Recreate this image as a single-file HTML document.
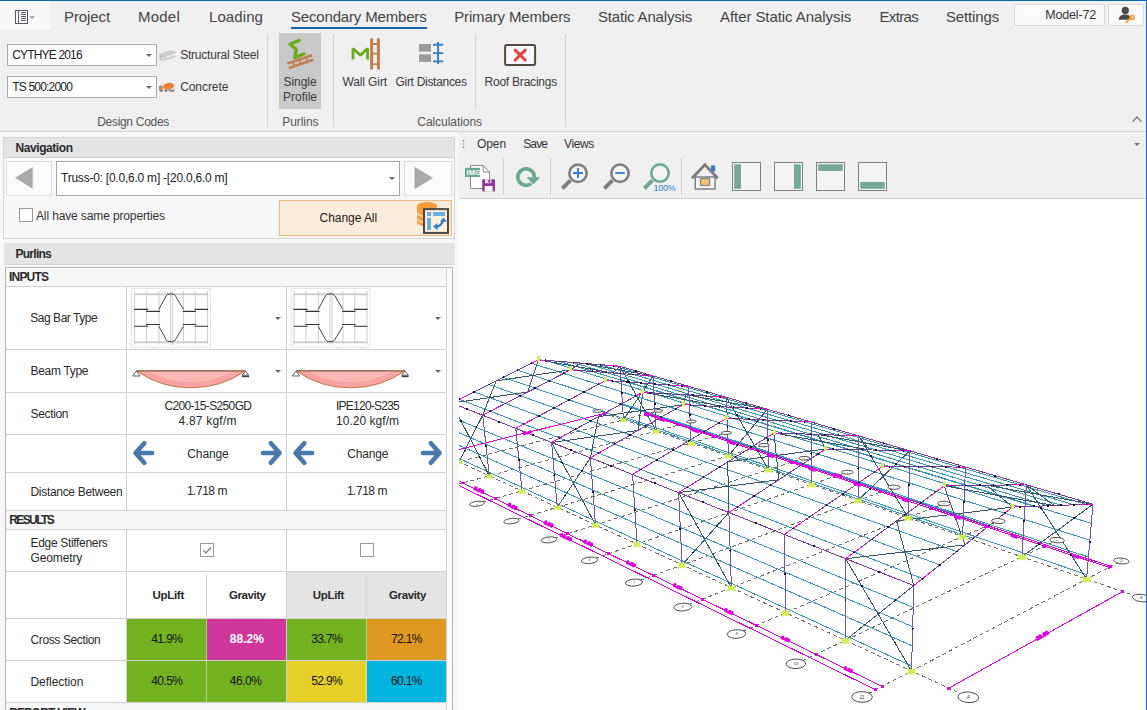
<!DOCTYPE html>
<html><head><meta charset="utf-8"><title>Purlins</title>
<style>
html,body{margin:0;padding:0}
body{width:1147px;height:710px;overflow:hidden;position:relative;background:#f0f0f0;font-family:"Liberation Sans",sans-serif;}
.a{position:absolute;box-sizing:border-box}
.t{position:absolute;white-space:pre;line-height:1;}
.sel{background:#fff;border:1px solid #ababab}
.arr{width:0;height:0;border-left:3px solid transparent;border-right:3px solid transparent;border-top:3px solid #666}
.vsep{width:1px;background:#d4d4d4}
.hdr{background:#e4e4e4}
.cell{background:#fff}
.ln{background:#d0d0d0}
</style></head><body>
<!-- window border -->
<div class="a" style="left:0;top:0;width:1147px;height:1px;background:#0f63b8"></div>
<div class="a" style="left:1146px;top:0;width:1px;height:710px;background:#1a6ac0;z-index:9"></div>
<!-- file button -->
<div class="a" style="left:0;top:1px;width:51px;height:29px;background:#f8f8f8"></div>
<!-- active tab underline -->
<div class="a" style="left:291px;top:27px;width:136px;height:2px;background:#1565b5"></div>
<!-- model button -->
<div class="a" style="left:1014px;top:4px;width:91px;height:22px;background:#f9f9f9;border:1px solid #d9d9d9;border-radius:2px"></div>
<div class="a" style="left:1108px;top:4px;width:36px;height:22px;background:#f9f9f9;border:1px solid #d9d9d9;border-radius:2px"></div>
<!-- ribbon -->
<div class="a sel" style="left:7px;top:44px;width:150px;height:22px"></div>
<div class="a sel" style="left:7px;top:76px;width:150px;height:22px"></div>
<div class="a arr" style="left:146px;top:54px"></div>
<div class="a arr" style="left:146px;top:86px"></div>
<div class="a vsep" style="left:267px;top:34px;height:93px"></div>
<div class="a" style="left:279px;top:33px;width:42px;height:76px;background:#c9c9c9"></div>
<div class="a vsep" style="left:333px;top:34px;height:93px"></div>
<div class="a vsep" style="left:475px;top:34px;height:75px"></div>
<div class="a vsep" style="left:565px;top:34px;height:93px"></div>
<div class="a" style="left:0;top:131px;width:1146px;height:1px;background:#d2d2d2"></div>
<!-- left pane -->
<div class="a" style="left:0;top:132px;width:459px;height:578px;background:#f8f8f8"></div>
<!-- left: navigation panel -->
<div class="a" style="left:3px;top:137px;width:452px;height:102px;border:1px solid #d4d4d4;background:#f8f8f8"></div>
<div class="a hdr" style="left:4px;top:138px;width:450px;height:19px"></div>
<div class="a" style="left:4px;top:157px;width:450px;height:1px;background:#d0d0d0"></div>
<div class="a" style="left:6px;top:161px;width:46px;height:35px;border:1px solid #dcdcdc;background:#fbfbfb"></div>
<div class="a" style="left:404px;top:161px;width:48px;height:35px;border:1px solid #dcdcdc;background:#fbfbfb"></div>
<div class="a sel" style="left:56px;top:161px;width:344px;height:35px;border-color:#a6a6a6"></div>
<div class="a arr" style="left:389px;top:177px"></div>
<div class="a" style="left:19px;top:208px;width:14px;height:14px;background:#fff;border:1px solid #9a9a9a"></div>
<div class="a" style="left:279px;top:200px;width:173px;height:36px;background:#fbecdc;border:1px solid #f2b77a"></div>
<!-- purlins header -->
<div class="a hdr" style="left:4px;top:243px;width:451px;height:22px;border-bottom:1px solid #d6d6d6"></div>
<!-- table container -->
<div class="a" style="left:5px;top:267px;width:448px;height:460px;background:#fff;border:1px solid #b4b4b4"></div>
<!-- table rows -->
<div class="a" style="left:6px;top:268px;width:440px;height:18px;background:#f8f8f8"></div>
<div class="a" style="left:6px;top:511px;width:440px;height:18px;background:#f8f8f8"></div>
<div class="a" style="left:6px;top:703px;width:440px;height:10px;background:#f8f8f8"></div>
<div class="a" style="left:286px;top:572px;width:160px;height:46px;background:#e4e4e4"></div>
<!-- horizontal lines -->
<div class="a ln" style="left:6px;top:286px;width:441px;height:1px"></div>
<div class="a ln" style="left:6px;top:349px;width:441px;height:1px"></div>
<div class="a ln" style="left:6px;top:392px;width:441px;height:1px"></div>
<div class="a ln" style="left:6px;top:434px;width:441px;height:1px"></div>
<div class="a ln" style="left:6px;top:472px;width:441px;height:1px"></div>
<div class="a ln" style="left:6px;top:510px;width:441px;height:1px"></div>
<div class="a ln" style="left:6px;top:529px;width:441px;height:1px"></div>
<div class="a ln" style="left:6px;top:571px;width:441px;height:1px"></div>
<div class="a ln" style="left:6px;top:618px;width:441px;height:1px"></div>
<div class="a ln" style="left:6px;top:660px;width:441px;height:1px"></div>
<div class="a ln" style="left:6px;top:702px;width:441px;height:1px"></div>
<!-- vertical lines -->
<div class="a ln" style="left:126px;top:287px;width:1px;height:223px"></div>
<div class="a ln" style="left:286px;top:287px;width:1px;height:223px"></div>
<div class="a ln" style="left:126px;top:530px;width:1px;height:172px"></div>
<div class="a ln" style="left:286px;top:530px;width:1px;height:172px"></div>
<div class="a ln" style="left:446px;top:268px;width:1px;height:442px"></div>
<div class="a ln" style="left:206px;top:574px;width:1px;height:42px"></div>
<div class="a ln" style="left:366px;top:574px;width:1px;height:42px;background:#d4d4d4"></div>
<!-- colored cells -->
<div class="a" style="left:127px;top:619px;width:80px;height:41px;background:#73b221"></div>
<div class="a" style="left:207px;top:619px;width:79px;height:41px;background:#d0379b"></div>
<div class="a" style="left:287px;top:619px;width:80px;height:41px;background:#73b221"></div>
<div class="a" style="left:367px;top:619px;width:79px;height:41px;background:#df9821"></div>
<div class="a" style="left:127px;top:661px;width:80px;height:41px;background:#73b221"></div>
<div class="a" style="left:207px;top:661px;width:79px;height:41px;background:#73b221"></div>
<div class="a" style="left:287px;top:661px;width:80px;height:41px;background:#e5d02a"></div>
<div class="a" style="left:367px;top:661px;width:79px;height:41px;background:#00b5e0"></div>
<div class="a" style="left:206px;top:619px;width:1px;height:83px;background:rgba(255,255,255,.45)"></div><div class="a" style="left:366px;top:619px;width:1px;height:83px;background:rgba(255,255,255,.45)"></div>
<!-- checkboxes -->
<div class="a" style="left:200px;top:543px;width:14px;height:14px;background:#fff;border:1px solid #9a9a9a"></div>
<div class="a" style="left:360px;top:543px;width:14px;height:14px;background:#fff;border:1px solid #9a9a9a"></div>
<!-- table dropdown arrows -->
<div class="a arr" style="left:275px;top:317px"></div>
<div class="a arr" style="left:435px;top:317px"></div>
<div class="a arr" style="left:275px;top:370px"></div>
<div class="a arr" style="left:435px;top:370px"></div>
<!-- splitter -->

<!-- right pane -->
<div class="a" style="left:459px;top:199px;width:687px;height:511px;background:#fff"></div>
<div class="a" style="left:459px;top:198px;width:687px;height:1px;background:#cfcfcf"></div>
<div class="a vsep" style="left:503px;top:158px;height:37px"></div>
<div class="a vsep" style="left:550px;top:158px;height:37px"></div>
<div class="a vsep" style="left:681px;top:158px;height:37px"></div>
<div class="a arr" style="left:1134px;top:143px;border-top-color:#777"></div>
<svg class="a" style="left:459px;top:199px" width="687" height="511" viewBox="459 199 687 511" fill="none" stroke-width="1" shape-rendering="crispEdges">
<path d="M868 693.8L1117.8 562.8M801.8 660.9L1053.6 541.8M742.4 631.4L994.7 522.6M688.6 604.7L940.4 504.9M639.8 580.5L890.3 488.6M595.2 558.3L843.8 473.4M554.4 538.1L800.6 459.4M516.9 519.4L760.4 446.3M482.3 502.2L722.9 434M450.3 486.3L687.7 422.5M420.5 471.6L654.7 411.8M963.8 695.1L436.6 451.5M1137.1 596.5L599.4 411.5" stroke="#6e6e6e" stroke-dasharray="4 3"/>
<path d="M922.6 578.6L459.5 399.3M939.8 564.9L474.3 391.9M956.7 551.5L488.9 384.5M973.1 538.4L503.3 377.3M989.2 525.6L517.5 370.2M1004.8 513.2L531.4 363.2M1086.7 504.4L613.6 365.8M1074.1 504.8L600.5 364.7M1061.1 505.3L587.1 363.7M1047.8 505.8L573.5 362.6M1034 506.3L559.6 361.5M1019.8 506.8L545.5 360.3M911.6 666L458.5 458.3M912.2 645.8L456.8 444.4M912.7 626.7L455.3 431.2M913.2 607.4L453.7 418M1087 574.7L623.3 416.6M1088.5 557L622.5 403.9M1089.9 540.2L621.7 391.9M1091.3 523.3L620.9 379.8" stroke="#3a96bd"/>
<path d="M911.5 671L845.7 558.7M845.3 640.4L913.8 585.6M1086.6 579.1L1026.3 484.8M1021.9 556.8L1092.9 504.2M913.8 585.6L896.6 521M845.7 558.7L965 544.9M965 544.9L944.1 485.8M896.6 521L1012.5 507.1M1092.9 504.2L986.9 485.3M1026.3 484.8L1054.5 505.6M1054.5 505.6L944.1 485.8M986.9 485.3L1012.5 507.1M731.4 587.7L678.6 492.6M682.1 564.9L728.9 512.5M908.2 517.7L858.5 435.8M858 500.4L909.8 450.8M728.9 512.5L727.7 461.9M678.6 492.6L778.8 479.8M778.8 479.8L774 433M727.7 461.9L825.6 449M909.8 450.8L817.8 434.4M858.5 435.8L869.3 449.9M869.3 449.9L774 433M817.8 434.4L825.6 449M595.5 524.9L551.6 442.5M557.3 507.3L590.4 457.8M768.5 469.7L726.5 397.3M728.4 455.9L767.3 409.2M590.4 457.8L598.4 416.7M551.6 442.5L638 430.5M638 430.5L642.7 392.2M598.4 416.7L683 404.7M767.3 409.2L686 394.8M726.5 397.3L726.6 407M726.6 407L642.7 392.2M686 394.8L683 404.7M489.3 475.9L451.9 403.1M458.9 461.8L482.7 415.2M656.2 431L620 366.3M623.5 419.8L653.1 375.9M482.7 415.2L496.1 380.9M451.9 403.1L527.7 392M527.7 392L538.3 359.8M496.1 380.9L570.6 369.8M653.1 375.9L580.4 363.1M620 366.3L613.1 373M613.1 373L538.3 359.8M580.4 363.1L570.6 369.8" stroke="#33566b"/>
<path d="M911.5 671L913.8 585.6M1086.6 579.1L1092.9 504.2M845.3 640.4L845.7 558.7M1021.9 556.8L1026.3 484.8M785.6 612.8L784.4 534.4M962.6 536.4L965.5 467M731.4 587.7L728.9 512.5M908.2 517.7L909.8 450.8M682.1 564.9L678.6 492.6M858 500.4L858.5 435.8M637 544.1L632.6 474.4M811.5 484.5L811.1 422M595.5 524.9L590.4 457.8M768.5 469.7L767.3 409.2M557.3 507.3L551.6 442.5M728.4 455.9L726.5 397.3M522 491L515.8 428.3M691.1 443L688.6 386.3M489.3 475.9L482.7 415.2M656.2 431L653.1 375.9M458.9 461.8L451.9 403.1M623.5 419.8L620 366.3" stroke="#6a55b0"/>
<path d="M913.8 585.6L451.9 403.1M1092.9 504.2L620 366.3M931.3 571.7L1004.8 513.2M1080.5 504.6L1019.8 506.8M863 545.8L936.4 491.5M1013.6 484.9L951.5 485.7M801.6 522.5L874.4 471.9M952.5 467L889.5 466.6M745.9 501.4L818 454M896.6 450.5L833.1 449.2M695.3 482.2L766.5 437.7M845.3 435.4L781.5 433.2M649 464.6L719.2 422.7M797.9 421.4L734.1 418.6M606.6 448.5L675.7 408.9M754 408.5L690.5 405.1M567.5 433.7L635.5 396.2M713.3 396.5L650.1 392.7M531.4 420L598.2 384.4M675.4 385.4L612.7 381.1M498 407.3L563.6 373.4M640.1 375L577.9 370.4M466.9 395.6L531.4 363.2M607 365.2L545.5 360.3" stroke="#7a3a9a"/>
<path d="M913.8 585.6L931.3 571.7M1004.8 513.2L1012.5 507.1M1092.9 504.2L1080.5 504.6M1019.8 506.8L1012.5 507.1M845.7 558.7L863 545.8M936.4 491.5L944.1 485.8M1026.3 484.8L1013.6 484.9M951.5 485.7L944.1 485.8M784.4 534.4L801.6 522.5M874.4 471.9L882.1 466.5M965.5 467L952.5 467M889.5 466.6L882.1 466.5M728.9 512.5L745.9 501.4M818 454L825.6 449M909.8 450.8L896.6 450.5M833.1 449.2L825.6 449M678.6 492.6L695.3 482.2M766.5 437.7L774 433M858.5 435.8L845.3 435.4M781.5 433.2L774 433M632.6 474.4L649 464.6M719.2 422.7L726.6 418.3M811.1 422L797.9 421.4M734.1 418.6L726.6 418.3M590.4 457.8L606.6 448.5M675.7 408.9L683 404.7M767.3 409.2L754 408.5M690.5 405.1L683 404.7M551.6 442.5L567.5 433.7M635.5 396.2L642.7 392.2M726.5 397.3L713.3 396.5M650.1 392.7L642.7 392.2M515.8 428.3L531.4 420M598.2 384.4L605.3 380.6M688.6 386.3L675.4 385.4M612.7 381.1L605.3 380.6M482.7 415.2L498 407.3M563.6 373.4L570.6 369.8M653.1 375.9L640.1 375M577.9 370.4L570.6 369.8M451.9 403.1L466.9 395.6M531.4 363.2L538.3 359.8M620 366.3L607 365.2M545.5 360.3L538.3 359.8" stroke="#ff00e6"/>
<path d="M882.1 686.4L432.9 468.4M875.6 689.8L427.2 469.9M1108.9 567.4L645.7 414.1M1110.9 566.4L647.7 413.6M948.8 688.2L1122.7 591.5M441.6 453.8L604.8 413.3" stroke="#dc00dc"/>
<g fill="#d6f060" stroke="none" shape-rendering="auto"><ellipse cx="911.5" cy="671.5" rx="4" ry="2.6"/><ellipse cx="1086.6" cy="579.6" rx="4" ry="2.6"/><ellipse cx="845.3" cy="640.9" rx="3.9" ry="2.6"/><ellipse cx="1021.9" cy="557.3" rx="3.9" ry="2.6"/><ellipse cx="785.6" cy="613.3" rx="3.7" ry="2.5"/><ellipse cx="962.6" cy="536.9" rx="3.7" ry="2.5"/><ellipse cx="731.4" cy="588.2" rx="3.6" ry="2.4"/><ellipse cx="908.2" cy="518.2" rx="3.6" ry="2.4"/><ellipse cx="682.1" cy="565.4" rx="3.5" ry="2.4"/><ellipse cx="858" cy="500.9" rx="3.5" ry="2.4"/><ellipse cx="637" cy="544.6" rx="3.4" ry="2.3"/><ellipse cx="811.5" cy="485" rx="3.4" ry="2.3"/><ellipse cx="595.5" cy="525.4" rx="3.3" ry="2.2"/><ellipse cx="768.5" cy="470.2" rx="3.3" ry="2.2"/><ellipse cx="557.3" cy="507.8" rx="3.2" ry="2.1"/><ellipse cx="728.4" cy="456.4" rx="3.2" ry="2.1"/><ellipse cx="522" cy="491.5" rx="3.1" ry="2.1"/><ellipse cx="691.1" cy="443.5" rx="3.1" ry="2.1"/><ellipse cx="489.3" cy="476.4" rx="3" ry="2"/><ellipse cx="656.2" cy="431.5" rx="3" ry="2"/><ellipse cx="458.9" cy="462.3" rx="2.9" ry="1.9"/><ellipse cx="623.5" cy="420.3" rx="2.9" ry="1.9"/></g>
<path d="M906.5 668.2L916.4 674.5M916.4 668.2L906.5 674.5M1081.7 576.4L1091.6 582.6M1091.6 576.4L1081.7 582.6M840.5 637.7L850.1 643.8M850.1 637.7L840.5 643.8M1017.1 554.2L1026.7 560.3M1026.7 554.2L1017.1 560.3M780.9 610.2L790.3 616.1M790.3 610.2L780.9 616.1M957.9 533.8L967.3 539.8M967.3 533.8L957.9 539.8M726.9 585.2L736 591M736 585.2L726.9 591M903.6 515.2L912.7 520.9M912.7 515.2L903.6 520.9M677.7 562.5L686.5 568.1M686.5 562.5L677.7 568.1M853.5 498L862.4 503.6M862.4 498L853.5 503.6M632.7 541.7L641.2 547.1M641.2 541.7L632.7 547.1M807.3 482.1L815.8 487.5M815.8 482.1L807.3 487.5M591.4 522.6L599.7 527.9M599.7 522.6L591.4 527.9M764.3 467.4L772.6 472.6M772.6 467.4L764.3 472.6M553.3 505.1L561.3 510.1M561.3 505.1L553.3 510.1M724.4 453.6L732.4 458.7M732.4 453.6L724.4 458.7M518.2 488.8L525.9 493.7M525.9 488.8L518.2 493.7M687.2 440.9L694.9 445.8M694.9 440.9L687.2 445.8M485.6 473.8L493 478.5M493 473.8L485.6 478.5M652.4 428.9L659.9 433.7M659.9 428.9L652.4 433.7M455.3 459.8L462.5 464.3M462.5 459.8L455.3 464.3M619.9 417.8L627.1 422.3M627.1 417.8L619.9 422.3" stroke="#d0ec50" stroke-width="1.6" shape-rendering="auto" opacity="0.8"/>
<g fill="#d4ee5a" stroke="none"><rect x="1011" y="503.6" width="3" height="5"/><rect x="942.6" y="482.3" width="3" height="5"/><rect x="880.6" y="463" width="3" height="5"/><rect x="824.1" y="445.5" width="3" height="5"/><rect x="772.5" y="429.5" width="3" height="5"/><rect x="725.1" y="414.8" width="3" height="5"/><rect x="681.5" y="401.2" width="3" height="5"/><rect x="641.2" y="388.7" width="3" height="5"/><rect x="603.8" y="377.1" width="3" height="5"/><rect x="569.1" y="366.3" width="3" height="5"/><rect x="536.8" y="356.3" width="3" height="5"/></g>
<g fill="#101020" stroke="none"><circle cx="912.6" cy="628.9" r="1.1"/><circle cx="1089.7" cy="542.1" r="1.1"/><circle cx="845.5" cy="600.1" r="1.1"/><circle cx="1024.1" cy="521.2" r="1.1"/><circle cx="785" cy="574.1" r="1.1"/><circle cx="964.1" cy="502.1" r="1.1"/><circle cx="730.2" cy="550.6" r="1.1"/><circle cx="909" cy="484.6" r="1.1"/><circle cx="680.3" cy="529.2" r="1.1"/><circle cx="858.2" cy="468.5" r="1.1"/><circle cx="634.8" cy="509.7" r="1.1"/><circle cx="811.3" cy="453.5" r="1.1"/><circle cx="593" cy="491.7" r="1.1"/><circle cx="767.9" cy="439.7" r="1.1"/><circle cx="554.5" cy="475.2" r="1.1"/><circle cx="727.5" cy="426.9" r="1.1"/><circle cx="519" cy="460" r="1.1"/><circle cx="689.8" cy="414.9" r="1.1"/><circle cx="486" cy="445.8" r="1.1"/><circle cx="654.7" cy="403.7" r="1.1"/><circle cx="455.4" cy="432.7" r="1.1"/><circle cx="621.8" cy="393.2" r="1.1"/><circle cx="878.8" cy="571.7" r="1.1"/><circle cx="814.2" cy="546.2" r="1.1"/><circle cx="756" cy="523.2" r="1.1"/><circle cx="703.2" cy="502.3" r="1.1"/><circle cx="655" cy="483.3" r="1.1"/><circle cx="611" cy="465.9" r="1.1"/><circle cx="570.6" cy="450" r="1.1"/><circle cx="533.4" cy="435.2" r="1.1"/><circle cx="499" cy="421.6" r="1.1"/><circle cx="467" cy="409" r="1.1"/><circle cx="1058.8" cy="494.2" r="1.1"/><circle cx="995.3" cy="475.7" r="1.1"/><circle cx="937.1" cy="458.7" r="1.1"/><circle cx="883.6" cy="443.1" r="1.1"/><circle cx="834.3" cy="428.8" r="1.1"/><circle cx="788.8" cy="415.5" r="1.1"/><circle cx="746.5" cy="403.2" r="1.1"/><circle cx="707.2" cy="391.7" r="1.1"/><circle cx="670.6" cy="381" r="1.1"/><circle cx="636.3" cy="371" r="1.1"/><circle cx="922.6" cy="578.6" r="1.0"/><circle cx="939.8" cy="564.9" r="1.0"/><circle cx="956.7" cy="551.5" r="1.0"/><circle cx="973.1" cy="538.4" r="1.0"/><circle cx="989.2" cy="525.6" r="1.0"/><circle cx="1004.8" cy="513.2" r="1.0"/><circle cx="1086.7" cy="504.4" r="1.0"/><circle cx="1074.1" cy="504.8" r="1.0"/><circle cx="1061.1" cy="505.3" r="1.0"/><circle cx="1047.8" cy="505.8" r="1.0"/><circle cx="1034" cy="506.3" r="1.0"/><circle cx="1019.8" cy="506.8" r="1.0"/><circle cx="854.4" cy="552.2" r="1.0"/><circle cx="871.6" cy="539.5" r="1.0"/><circle cx="888.3" cy="527.1" r="1.0"/><circle cx="904.7" cy="514.9" r="1.0"/><circle cx="920.7" cy="503.1" r="1.0"/><circle cx="936.4" cy="491.5" r="1.0"/><circle cx="1020" cy="484.8" r="1.0"/><circle cx="1007" cy="485" r="1.0"/><circle cx="993.7" cy="485.2" r="1.0"/><circle cx="980" cy="485.3" r="1.0"/><circle cx="966" cy="485.5" r="1.0"/><circle cx="951.5" cy="485.7" r="1.0"/><circle cx="793" cy="528.4" r="1.0"/><circle cx="810" cy="516.6" r="1.0"/><circle cx="826.6" cy="505.1" r="1.0"/><circle cx="842.9" cy="493.8" r="1.0"/><circle cx="858.8" cy="482.7" r="1.0"/><circle cx="874.4" cy="471.9" r="1.0"/><circle cx="959.1" cy="467" r="1.0"/><circle cx="945.9" cy="466.9" r="1.0"/><circle cx="932.4" cy="466.8" r="1.0"/><circle cx="918.5" cy="466.8" r="1.0"/><circle cx="904.2" cy="466.7" r="1.0"/><circle cx="889.5" cy="466.6" r="1.0"/><circle cx="737.5" cy="506.9" r="1.0"/><circle cx="754.3" cy="495.9" r="1.0"/><circle cx="770.7" cy="485.1" r="1.0"/><circle cx="786.8" cy="474.5" r="1.0"/><circle cx="802.6" cy="464.2" r="1.0"/><circle cx="818" cy="454" r="1.0"/><circle cx="903.3" cy="450.6" r="1.0"/><circle cx="889.9" cy="450.4" r="1.0"/><circle cx="876.3" cy="450.1" r="1.0"/><circle cx="862.3" cy="449.8" r="1.0"/><circle cx="847.9" cy="449.5" r="1.0"/><circle cx="833.1" cy="449.2" r="1.0"/><circle cx="687" cy="487.4" r="1.0"/><circle cx="703.5" cy="477" r="1.0"/><circle cx="719.7" cy="466.9" r="1.0"/><circle cx="735.6" cy="457" r="1.0"/><circle cx="751.2" cy="447.2" r="1.0"/><circle cx="766.5" cy="437.7" r="1.0"/><circle cx="851.9" cy="435.6" r="1.0"/><circle cx="838.5" cy="435.1" r="1.0"/><circle cx="824.8" cy="434.7" r="1.0"/><circle cx="810.7" cy="434.2" r="1.0"/><circle cx="796.3" cy="433.7" r="1.0"/><circle cx="781.5" cy="433.2" r="1.0"/><circle cx="640.8" cy="469.5" r="1.0"/><circle cx="657.1" cy="459.8" r="1.0"/><circle cx="673.1" cy="450.2" r="1.0"/><circle cx="688.7" cy="440.9" r="1.0"/><circle cx="704.1" cy="431.7" r="1.0"/><circle cx="719.2" cy="422.7" r="1.0"/><circle cx="804.5" cy="421.7" r="1.0"/><circle cx="791.1" cy="421.1" r="1.0"/><circle cx="777.4" cy="420.5" r="1.0"/><circle cx="763.3" cy="419.9" r="1.0"/><circle cx="748.9" cy="419.3" r="1.0"/><circle cx="734.1" cy="418.6" r="1.0"/><circle cx="598.5" cy="453.1" r="1.0"/><circle cx="614.5" cy="444" r="1.0"/><circle cx="630.2" cy="435" r="1.0"/><circle cx="645.6" cy="426.1" r="1.0"/><circle cx="660.8" cy="417.4" r="1.0"/><circle cx="675.7" cy="408.9" r="1.0"/><circle cx="760.7" cy="408.9" r="1.0"/><circle cx="747.2" cy="408.1" r="1.0"/><circle cx="733.5" cy="407.4" r="1.0"/><circle cx="719.5" cy="406.7" r="1.0"/><circle cx="705.2" cy="405.9" r="1.0"/><circle cx="690.5" cy="405.1" r="1.0"/><circle cx="559.6" cy="438.1" r="1.0"/><circle cx="575.3" cy="429.4" r="1.0"/><circle cx="590.7" cy="420.9" r="1.0"/><circle cx="605.9" cy="412.5" r="1.0"/><circle cx="620.8" cy="404.3" r="1.0"/><circle cx="635.5" cy="396.2" r="1.0"/><circle cx="719.9" cy="396.9" r="1.0"/><circle cx="706.6" cy="396.1" r="1.0"/><circle cx="692.9" cy="395.3" r="1.0"/><circle cx="679" cy="394.4" r="1.0"/><circle cx="664.7" cy="393.5" r="1.0"/><circle cx="650.1" cy="392.7" r="1.0"/><circle cx="523.6" cy="424.2" r="1.0"/><circle cx="539.1" cy="415.9" r="1.0"/><circle cx="554.2" cy="407.8" r="1.0"/><circle cx="569.1" cy="399.9" r="1.0"/><circle cx="583.8" cy="392.1" r="1.0"/><circle cx="598.2" cy="384.4" r="1.0"/><circle cx="682" cy="385.8" r="1.0"/><circle cx="668.7" cy="384.9" r="1.0"/><circle cx="655.2" cy="384" r="1.0"/><circle cx="641.3" cy="383" r="1.0"/><circle cx="627.2" cy="382.1" r="1.0"/><circle cx="612.7" cy="381.1" r="1.0"/><circle cx="490.4" cy="411.3" r="1.0"/><circle cx="505.5" cy="403.5" r="1.0"/><circle cx="520.4" cy="395.8" r="1.0"/><circle cx="535" cy="388.2" r="1.0"/><circle cx="549.4" cy="380.8" r="1.0"/><circle cx="563.6" cy="373.4" r="1.0"/><circle cx="646.6" cy="375.4" r="1.0"/><circle cx="633.4" cy="374.5" r="1.0"/><circle cx="620" cy="373.5" r="1.0"/><circle cx="606.2" cy="372.5" r="1.0"/><circle cx="592.2" cy="371.4" r="1.0"/><circle cx="577.9" cy="370.4" r="1.0"/><circle cx="459.5" cy="399.3" r="1.0"/><circle cx="474.3" cy="391.9" r="1.0"/><circle cx="488.9" cy="384.5" r="1.0"/><circle cx="503.3" cy="377.3" r="1.0"/><circle cx="517.5" cy="370.2" r="1.0"/><circle cx="531.4" cy="363.2" r="1.0"/><circle cx="613.6" cy="365.8" r="1.0"/><circle cx="600.5" cy="364.7" r="1.0"/><circle cx="587.1" cy="363.7" r="1.0"/><circle cx="573.5" cy="362.6" r="1.0"/><circle cx="559.6" cy="361.5" r="1.0"/><circle cx="545.5" cy="360.3" r="1.0"/><circle cx="894.7" cy="642.3" r="1.0"/><circle cx="861.4" cy="627.5" r="1.0"/><circle cx="861.8" cy="586.2" r="1.0"/><circle cx="895.6" cy="600.1" r="1.0"/><circle cx="1071.3" cy="555.1" r="1.0"/><circle cx="1038.7" cy="544.3" r="1.0"/><circle cx="1041.2" cy="508" r="1.0"/><circle cx="1074.2" cy="518" r="1.0"/><circle cx="718" cy="563.6" r="1.0"/><circle cx="693.2" cy="552.5" r="1.0"/><circle cx="691.6" cy="516" r="1.0"/><circle cx="716.6" cy="526.3" r="1.0"/><circle cx="895.6" cy="496.9" r="1.0"/><circle cx="870.3" cy="488.6" r="1.0"/><circle cx="870.7" cy="456" r="1.0"/><circle cx="896.2" cy="463.8" r="1.0"/><circle cx="584.4" cy="504" r="1.0"/><circle cx="565.2" cy="495.5" r="1.0"/><circle cx="562.4" cy="462.8" r="1.0"/><circle cx="581.7" cy="470.7" r="1.0"/><circle cx="757.8" cy="451.3" r="1.0"/><circle cx="737.7" cy="444.7" r="1.0"/><circle cx="736.9" cy="415.2" r="1.0"/><circle cx="757.1" cy="421.4" r="1.0"/><circle cx="479.8" cy="457.4" r="1.0"/><circle cx="464.6" cy="450.6" r="1.0"/><circle cx="461.2" cy="421" r="1.0"/><circle cx="476.5" cy="427.4" r="1.0"/><circle cx="647" cy="414.6" r="1.0"/><circle cx="630.6" cy="409.2" r="1.0"/><circle cx="628.9" cy="382.3" r="1.0"/><circle cx="645.5" cy="387.3" r="1.0"/></g>
<g fill="#e600e6" stroke="none"><rect x="880.7" y="685" width="2.8" height="2.8"/><rect x="814.5" y="652.9" width="2.8" height="2.8"/><rect x="755" y="624" width="2.8" height="2.8"/><rect x="701.1" y="597.8" width="2.8" height="2.8"/><rect x="652.1" y="574" width="2.8" height="2.8"/><rect x="607.3" y="552.3" width="2.8" height="2.8"/><rect x="566.3" y="532.4" width="2.8" height="2.8"/><rect x="528.6" y="514.1" width="2.8" height="2.8"/><rect x="493.7" y="497.2" width="2.8" height="2.8"/><rect x="461.4" y="481.6" width="2.8" height="2.8"/><rect x="431.5" y="467" width="2.8" height="2.8"/><rect x="874.2" y="688.4" width="2.8" height="2.8"/><rect x="425.8" y="468.5" width="2.8" height="2.8"/><rect x="1107.5" y="566" width="2.8" height="2.8"/><rect x="1043.1" y="544.7" width="2.8" height="2.8"/><rect x="984.1" y="525.2" width="2.8" height="2.8"/><rect x="929.7" y="507.2" width="2.8" height="2.8"/><rect x="879.6" y="490.6" width="2.8" height="2.8"/><rect x="833.1" y="475.2" width="2.8" height="2.8"/><rect x="790" y="460.9" width="2.8" height="2.8"/><rect x="749.8" y="447.6" width="2.8" height="2.8"/><rect x="712.3" y="435.2" width="2.8" height="2.8"/><rect x="677.2" y="423.6" width="2.8" height="2.8"/><rect x="644.3" y="412.7" width="2.8" height="2.8"/><rect x="1109.5" y="565" width="2.8" height="2.8"/><rect x="646.3" y="412.2" width="2.8" height="2.8"/><rect x="947.4" y="686.8" width="2.8" height="2.8"/><rect x="1121.3" y="590.1" width="2.8" height="2.8"/><rect x="440.2" y="452.4" width="2.8" height="2.8"/><rect x="603.4" y="411.9" width="2.8" height="2.8"/></g>
<g fill="#dc00dc" stroke="#dc00dc" stroke-width="0.9" shape-rendering="auto" font-family="Liberation Sans,sans-serif" font-weight="bold" text-anchor="middle"><text x="848.1" y="671.1" font-size="4.6000000000000005" transform="rotate(25.9 848.1 669.9)">6.00</text><text x="1075.7" y="557.9" font-size="3.5" transform="rotate(18.3 1075.7 556.7)">6.00</text><text x="785.4" y="640.6" font-size="4.680000000000001" transform="rotate(25.9 785.4 639.4)">6.00</text><text x="1014.1" y="537.5" font-size="3.5" transform="rotate(18.3 1014.1 536.3)">6.00</text><text x="728.8" y="613.2" font-size="4.76" transform="rotate(25.9 728.8 612)">6.00</text><text x="957.5" y="518.7" font-size="3.5" transform="rotate(18.3 957.5 517.5)">6.00</text><text x="677.4" y="588.3" font-size="4.84" transform="rotate(25.9 677.4 587.1)">6.00</text><text x="905.3" y="501.4" font-size="3.5" transform="rotate(18.3 905.3 500.2)">6.00</text><text x="630.6" y="565.5" font-size="4.92" transform="rotate(25.9 630.6 564.3)">6.00</text><text x="857" y="485.5" font-size="3.5" transform="rotate(18.3 857 484.3)">6.00</text><text x="587.8" y="544.8" font-size="5.0" transform="rotate(25.9 587.8 543.6)">6.00</text><text x="812.3" y="470.6" font-size="3.5" transform="rotate(18.3 812.3 469.4)">6.00</text><text x="548.4" y="525.7" font-size="5.08" transform="rotate(25.9 548.4 524.5)">6.00</text><text x="770.6" y="456.9" font-size="3.5" transform="rotate(18.3 770.6 455.7)">6.00</text><text x="512.2" y="508.1" font-size="5.16" transform="rotate(25.9 512.2 506.9)">6.00</text><text x="731.8" y="444" font-size="3.5" transform="rotate(18.3 731.8 442.8)">6.00</text><text x="478.7" y="491.8" font-size="5.24" transform="rotate(25.9 478.7 490.6)">6.00</text><text x="695.6" y="432" font-size="3.5" transform="rotate(18.3 695.6 430.8)">6.00</text><text x="447.6" y="476.8" font-size="5.32" transform="rotate(25.9 447.6 475.6)">6.00</text><text x="661.6" y="420.7" font-size="3.5" transform="rotate(18.3 661.6 419.5)">6.00</text><text x="565.6" y="538.9" font-size="5" transform="rotate(26.1 565.6 537.7)">60.00</text><text x="838" y="476.7" font-size="3.5" transform="rotate(18.2 838 475.5)">60.00</text><text x="1042.7" y="637.2" font-size="5.5" transform="rotate(-29.1 1042.7 636)">20.00</text><text x="527.4" y="433.8" font-size="3.5" transform="rotate(-13.9 527.4 432.6)">20.00</text></g>
<path d="M854.6 693.2L857.2 692.2L860.2 691.7L863.4 691.7L866.4 692.2L869.1 693.2L871 694.5L872.1 696.1L872.2 697.7L871.3 699.3L869.5 700.7L866.9 701.6L863.9 702.2L860.6 702.2L857.5 701.6L854.9 700.6L852.9 699.3L851.9 697.7L851.8 696.1L852.8 694.5ZM1114.9 558.8L1116.5 558.3L1118.5 558L1120.8 558L1123.2 558.3L1125.4 558.8L1127.2 559.5L1128.4 560.4L1129 561.4L1128.8 562.3L1127.9 563L1126.3 563.6L1124.2 563.9L1121.9 563.9L1119.5 563.6L1117.3 563L1115.5 562.3L1114.3 561.4L1113.7 560.5L1114 559.6ZM789.3 660.4L791.8 659.6L794.7 659.1L797.7 659.1L800.5 659.6L802.9 660.4L804.7 661.6L805.5 663L805.5 664.5L804.5 665.9L802.6 667.1L800.1 668L797.2 668.5L794.1 668.5L791.2 668L788.8 667.1L787.1 665.9L786.2 664.5L786.4 663L787.4 661.6ZM1051.3 538.2L1052.9 537.7L1054.9 537.5L1057 537.5L1059.3 537.7L1061.3 538.2L1062.9 538.9L1064 539.7L1064.4 540.5L1064.1 541.3L1063.1 542L1061.5 542.6L1059.6 542.8L1057.3 542.8L1055.1 542.6L1053.1 542.1L1051.5 541.4L1050.4 540.6L1050 539.7L1050.4 538.9ZM730.5 630.9L733 630.2L735.7 629.8L738.6 629.8L741.3 630.2L743.5 630.9L745 632L745.7 633.3L745.5 634.6L744.4 635.9L742.5 637L740.1 637.8L737.2 638.2L734.3 638.2L731.6 637.8L729.4 637L727.9 635.9L727.3 634.6L727.5 633.3L728.6 632ZM993 519.3L994.5 518.9L996.4 518.6L998.5 518.6L1000.5 518.8L1002.4 519.3L1003.9 519.9L1004.8 520.6L1005.1 521.4L1004.7 522.2L1003.7 522.8L1002.2 523.3L1000.2 523.5L998.1 523.5L996 523.3L994.2 522.8L992.7 522.2L991.8 521.5L991.6 520.7L992 520ZM677.4 604.3L679.8 603.6L682.5 603.2L685.2 603.2L687.7 603.6L689.7 604.3L691.1 605.3L691.6 606.4L691.3 607.6L690.1 608.8L688.3 609.8L685.9 610.5L683.1 610.9L680.4 610.9L677.8 610.5L675.8 609.8L674.5 608.8L674 607.6L674.3 606.4L675.5 605.3ZM939.2 501.9L940.7 501.5L942.5 501.3L944.5 501.2L946.4 501.5L948.2 501.9L949.5 502.4L950.3 503.1L950.5 503.8L950 504.5L949 505.1L947.5 505.5L945.6 505.7L943.6 505.7L941.7 505.5L939.9 505.1L938.6 504.5L937.9 503.9L937.7 503.2L938.1 502.5ZM629.1 580.1L631.5 579.4L634.1 579.1L636.7 579.1L639 579.4L640.9 580.1L642.1 581L642.5 582L642.1 583.1L640.9 584.2L639 585.1L636.7 585.7L634 586.1L631.4 586.1L629 585.7L627.2 585.1L626 584.2L625.6 583.1L626 582L627.2 581ZM889.5 485.8L890.9 485.4L892.7 485.2L894.6 485.2L896.4 485.4L898 485.8L899.2 486.3L899.9 486.9L900 487.5L899.5 488.2L898.5 488.7L897 489.1L895.2 489.3L893.3 489.3L891.4 489.1L889.8 488.7L888.7 488.2L888 487.6L887.9 486.9L888.4 486.3ZM585.1 558L587.4 557.4L589.9 557.1L592.4 557.1L594.6 557.4L596.3 558L597.4 558.8L597.7 559.7L597.2 560.8L596 561.7L594.1 562.6L591.8 563.2L589.3 563.5L586.8 563.5L584.5 563.2L582.8 562.6L581.7 561.8L581.5 560.8L582 559.8L583.2 558.8ZM843.3 470.9L844.8 470.5L846.5 470.3L848.3 470.3L850 470.5L851.5 470.8L852.6 471.3L853.2 471.9L853.2 472.5L852.7 473L851.6 473.5L850.2 473.9L848.5 474.1L846.6 474.1L844.9 473.9L843.4 473.6L842.3 473.1L841.8 472.5L841.8 471.9L842.3 471.3ZM544.7 537.8L547 537.2L549.4 536.9L551.8 536.9L553.9 537.2L555.5 537.7L556.4 538.5L556.7 539.4L556.1 540.3L554.9 541.2L553 541.9L550.8 542.5L548.3 542.8L545.9 542.8L543.8 542.5L542.2 542L541.2 541.2L541 540.3L541.6 539.4L542.9 538.5ZM800.5 457L801.9 456.6L803.6 456.5L805.3 456.4L806.9 456.6L808.3 456.9L809.3 457.4L809.8 457.9L809.7 458.5L809.2 459L808.1 459.4L806.7 459.8L805 460L803.3 460L801.7 459.8L800.3 459.5L799.3 459L798.8 458.5L798.9 458L799.4 457.4ZM507.6 519.2L509.8 518.7L512.2 518.4L514.4 518.4L516.4 518.6L517.9 519.1L518.8 519.8L519 520.6L518.4 521.5L517.1 522.3L515.3 523L513.1 523.5L510.7 523.8L508.4 523.8L506.4 523.6L504.9 523L504 522.4L503.9 521.5L504.5 520.7L505.8 519.9ZM760.5 444L761.9 443.7L763.5 443.5L765.2 443.5L766.7 443.7L768 444L768.9 444.4L769.3 444.9L769.2 445.4L768.6 445.9L767.6 446.3L766.2 446.6L764.6 446.8L762.9 446.8L761.4 446.6L760.1 446.4L759.2 445.9L758.8 445.4L758.9 444.9L759.5 444.4ZM473.4 502L475.5 501.5L477.8 501.3L480 501.3L481.9 501.5L483.3 502L484.1 502.6L484.2 503.3L483.5 504.1L482.3 504.9L480.5 505.6L478.3 506L476 506.3L473.8 506.3L471.9 506.1L470.5 505.6L469.7 505L469.7 504.2L470.3 503.4L471.6 502.6ZM723.2 431.9L724.6 431.6L726.1 431.5L727.7 431.5L729.1 431.6L730.3 431.9L731.2 432.3L731.5 432.7L731.4 433.2L730.8 433.7L729.7 434L728.4 434.3L726.8 434.5L725.2 434.5L723.8 434.4L722.6 434.1L721.7 433.7L721.4 433.3L721.5 432.8L722.2 432.3ZM441.7 486.1L443.8 485.7L446 485.4L448.1 485.4L449.9 485.7L451.2 486.1L451.9 486.7L452 487.4L451.3 488.1L450.1 488.8L448.3 489.4L446.2 489.9L443.9 490.1L441.8 490.1L440 489.9L438.7 489.4L438 488.9L438 488.2L438.6 487.4L439.9 486.7ZM688.2 420.6L689.6 420.3L691 420.2L692.6 420.2L693.9 420.3L695.1 420.6L695.8 420.9L696.1 421.3L696 421.8L695.3 422.2L694.3 422.6L693 422.8L691.5 423L690 423L688.6 422.9L687.4 422.6L686.7 422.3L686.4 421.8L686.6 421.4L687.2 421ZM412.3 471.4L414.4 471L416.5 470.7L418.5 470.7L420.2 470.9L421.5 471.3L422.1 471.9L422.1 472.5L421.4 473.2L420.2 473.9L418.4 474.4L416.3 474.8L414.2 475.1L412.1 475.1L410.4 474.9L409.2 474.5L408.5 473.9L408.6 473.3L409.3 472.6L410.6 471.9ZM655.4 410L656.7 409.7L658.2 409.6L659.6 409.6L660.9 409.7L662 409.9L662.7 410.3L662.9 410.7L662.7 411.1L662.1 411.5L661.1 411.8L659.8 412.1L658.3 412.2L656.9 412.2L655.5 412.1L654.5 411.8L653.8 411.5L653.5 411.1L653.8 410.7L654.4 410.3ZM960.3 693.5L962.7 692.5L965.6 692L968.8 692L972 692.5L974.8 693.5L977 694.8L978.4 696.4L978.7 698.1L978.1 699.6L976.5 701L974.1 702L971.1 702.5L967.8 702.5L964.6 702L961.8 701L959.6 699.6L958.3 698L957.9 696.4L958.6 694.8ZM1133.7 595.3L1135.6 594.6L1138 594.3L1140.7 594.3L1143.5 594.6L1146.1 595.3L1148.3 596.3L1149.8 597.4L1150.5 598.6L1150.3 599.7L1149.3 600.7L1147.4 601.4L1145 601.8L1142.2 601.8L1139.4 601.4L1136.7 600.7L1134.6 599.7L1133.1 598.6L1132.4 597.4L1132.6 596.3ZM432.6 449.7L434.3 449.4L436 449.2L437.7 449.2L439.1 449.3L440.1 449.6L440.7 450.1L440.7 450.6L440.1 451.1L439.1 451.6L437.7 452L436.1 452.3L434.3 452.5L432.7 452.5L431.2 452.4L430.2 452.1L429.7 451.6L429.7 451.1L430.2 450.6L431.2 450.1ZM595.1 410L596.5 409.7L598 409.6L599.5 409.6L600.9 409.7L601.9 410L602.6 410.3L602.8 410.7L602.5 411.1L601.8 411.5L600.6 411.9L599.3 412.2L597.7 412.3L596.2 412.3L594.9 412.2L593.8 411.9L593.2 411.6L593 411.2L593.3 410.8L594 410.4Z" fill="#fff" stroke="#4a4a4a" shape-rendering="auto"/>
<g fill="#333" stroke="none" font-family="Liberation Sans,sans-serif" font-style="italic" text-anchor="middle"><text x="862" y="698.7" font-size="4.7">11</text><text x="1121.4" y="561.9" font-size="2.7">11</text><text x="795.9" y="665.4" font-size="4.2">10</text><text x="1057.2" y="541.1" font-size="2.4">10</text><text x="736.5" y="635.4" font-size="3.8">9</text><text x="998.3" y="521.9" font-size="2.2">9</text><text x="682.8" y="608.3" font-size="3.4">8</text><text x="944.1" y="504.3" font-size="2">8</text><text x="634" y="583.8" font-size="3.1">7</text><text x="893.9" y="488" font-size="1.9">7</text><text x="589.6" y="561.4" font-size="2.9">6</text><text x="847.5" y="472.8" font-size="1.7">6</text><text x="548.9" y="540.9" font-size="2.6">5</text><text x="804.3" y="458.8" font-size="1.6">5</text><text x="511.4" y="522" font-size="2.4">4</text><text x="764" y="445.7" font-size="1.5">4</text><text x="476.9" y="504.6" font-size="2.3">3</text><text x="726.5" y="433.5" font-size="1.4">3</text><text x="445" y="488.6" font-size="2.1">2</text><text x="691.3" y="422.1" font-size="1.3">2</text><text x="415.3" y="473.6" font-size="2">1</text><text x="658.2" y="411.3" font-size="1.2">1</text><text x="968.3" y="699" font-size="4.7">A</text><text x="1141.5" y="599.3" font-size="3.4">B</text><text x="435.2" y="451.4" font-size="1.5">A</text><text x="597.9" y="411.4" font-size="1.2">B</text></g>
</svg>
<svg class="a" style="left:0;top:0;pointer-events:none" width="1147" height="710" viewBox="0 0 1147 710" fill="none">
<!-- file menu icon -->
<rect x="15.5" y="10.5" width="12" height="13" stroke="#5c5762" stroke-width="1" fill="#fff" shape-rendering="crispEdges"/>
<path d="M18.5 10.5V23.5" stroke="#5c5762" stroke-width="1" shape-rendering="crispEdges"/>
<path d="M20.5 12.5h5.5M20.5 14.5h5.5M20.5 16.5h5.5M20.5 18.5h5.5M20.5 20.5h5.5" stroke="#5c5762" stroke-width="1" shape-rendering="crispEdges"/>
<path d="M29.3 16.2h5.6l-2.8 2.9z" fill="#9aa5a0"/>
<!-- model icon (faint) -->
<g stroke="#fff" stroke-width="1.2"><rect x="1026.5" y="9.5" width="11" height="11"/><path d="M1026.5 9.5l11 11M1037.5 9.5l-11 11"/></g>
<!-- user icon -->
<circle cx="1125.3" cy="10.4" r="3.6" fill="#4a4a42"/>
<path d="M1118.8 19.8c0-3.6 2.6-5.4 6.5-5.4s4.6 1.6 4.8 3.2l-2.6 2.2z" fill="#4a4a42"/>
<path d="M1126.3 22.3l5-4.6" stroke="#f89a30" stroke-width="1.8" stroke-linecap="round"/>
<circle cx="1132.2" cy="17.4" r="1.9" stroke="#f89a30" stroke-width="1.5"/>
<!-- steel icon -->
<g>
<path d="M159.5 54.5l11-3.6 4.6 1-11 3.7z" fill="#d8d8d8" stroke="#b4b4b4" stroke-width=".6"/>
<path d="M159.5 54.5l4.6 1.1v1l-1.6.5v2.6l1.6.4v1l-4.6-1z" fill="#c2c2c2"/>
<path d="M164.1 55.6l11-3.7v1l-9.4 3.2v2.6l9.4-3v1l-11 3.5z" fill="#cfcfcf" stroke="#b8b8b8" stroke-width=".5"/>
</g>
<!-- concrete icon -->
<g>
<ellipse cx="168.5" cy="86.2" rx="5.6" ry="3.3" fill="#f08030" transform="rotate(-8 168.5 86.2)"/>
<rect x="159" y="85.5" width="3.6" height="4.6" rx=".8" fill="#f08030"/>
<rect x="159.6" y="86" width="2" height="1.6" fill="#5a8ac0"/>
<path d="M159 90.2h15.5" stroke="#909090" stroke-width="1"/>
<circle cx="161.3" cy="90.8" r="1.1" fill="#707070"/><circle cx="166" cy="90.8" r="1.1" fill="#707070"/><circle cx="170.5" cy="90.8" r="1.1" fill="#707070"/><circle cx="173" cy="90.8" r="1.1" fill="#707070"/>
</g>
<!-- single profile -->
<path d="M299.2 40.4l-9.3 3.8 6.5 5.4-1.7 8 9.2-3.6" stroke="#6aa81e" stroke-width="3.2" stroke-linejoin="round" stroke-linecap="round"/>
<g stroke="#c0804e" stroke-width="2.6" stroke-linecap="round"><path d="M288.3 63.2l22.8-7.6M289.8 67.8l22.6-7.7"/><path d="M293 61.8l1.4 4.4M299.5 59.6l1.4 4.4M306 57.4l1.4 4.4" stroke-width="1.8"/></g>
<!-- wall girt -->
<path d="M353 59.6v-11.2l7.3 6.8 7.3-6.8v11.2" stroke="#6aa81e" stroke-width="2.8" stroke-linejoin="bevel"/>
<g stroke="#c0804e"><path d="M371.6 38.3v31.3M378.4 38.3v31.3" stroke-width="3"/><path d="M371.6 44h6.8M371.6 53.6h6.8M371.6 64.2h6.8" stroke-width="1.8"/></g>
<!-- girt distances -->
<rect x="419" y="44" width="12" height="7.6" fill="#9b9b9b"/><rect x="419" y="54.3" width="12" height="7.6" fill="#9b9b9b"/>
<path d="M438.1 42v22M433 44.7h10.2M433 53.1h10.2M433 61.4h10.2" stroke="#2f7dc4" stroke-width="1.9"/>
<!-- roof bracings -->
<rect x="505.1" y="45" width="30" height="20" rx="1.8" fill="#f8f8f8" stroke="#504c40" stroke-width="2"/>
<path d="M515.2 50.2l10 9.8M525.2 50.2l-10 9.8" stroke="#e84444" stroke-width="3.1" stroke-linecap="round"/>
<!-- ribbon collapse chevron -->
<path d="M1132.8 121.6l4.3-4.6 4.3 4.6" stroke="#777" stroke-width="1.3"/>
<!-- nav triangles -->
<path d="M15 177.7l17.7-10.6v21.7z" fill="#a9a9a9"/>
<path d="M433.1 178l-18.6-11.3v22.5z" fill="#a9a9a9"/>
<!-- change all icon -->
<g>
<path d="M417 206.4v15.6c0 2.4 4.5 4.4 10.1 4.4s10.1-2 10.1-4.4v-15.6z" fill="#fa9a3c"/>
<ellipse cx="427.1" cy="206.4" rx="10.1" ry="4.4" fill="#fa9a3c"/>
<path d="M417 212.6c1 2.6 5 3.8 10.1 3.8M417 218.4c1 2.6 5 3.8 10.1 3.8" stroke="#fcefde" stroke-width="1.2"/>
<rect x="424" y="209.1" width="24" height="23.8" fill="#fcefde" stroke="#4a4a44" stroke-width="2"/>
<rect x="427" y="212" width="4" height="4" fill="#6aaee8"/><rect x="433" y="212" width="12" height="4" fill="#6aaee8"/><rect x="427" y="217.8" width="4" height="12.2" fill="#6aaee8"/>
<path d="M436 226.6c4-.4 6.6-3 7-6.4" stroke="#2f7fd0" stroke-width="2.2"/>
<path d="M433 226.8l4.4-3.8.4 7.2zM443.3 217.4l3.6 4.2-7 .4z" fill="#2f7fd0"/>
</g>
<!-- check mark -->
<path d="M203.3 550.4l2.7 2.5 4.9-5.4" stroke="#7c7c7c" stroke-width="1.3"/>
<!-- change arrows -->
<g stroke="#4a78a8" stroke-width="4.6" stroke-linecap="round" stroke-linejoin="round">
<path d="M144.3 443.3l-8.8 9.7 8.8 9.7M136.5 453h15.6"/>
<path d="M270.8 443.3l8.8 9.7-8.8 9.7M278.6 453h-15.6"/>
<path d="M304.3 443.3l-8.8 9.7 8.8 9.7M296.5 453h15.6"/>
<path d="M430.8 443.3l8.8 9.7-8.8 9.7M438.6 453h-15.6"/>
</g>
<!-- toolbar grip -->
<path d="M463.5 140v1.4M463.5 143.3v1.4M463.5 146.6v1.4" stroke="#8a8a8a" stroke-width="1.4"/>
<!-- img save -->
<path d="M470.5 165.5h12.7l6.3 6.5v16.5h-19z" fill="#fff" stroke="#8a8a8a"/>
<path d="M483.2 165.5v6.5h6.3" stroke="#8a8a8a"/>
<rect x="465" y="167.8" width="15" height="9.2" fill="#6ba88f"/>
<rect x="482.2" y="179.2" width="12.8" height="12.4" rx="1" fill="#8b3a9c"/>
<rect x="485" y="179.2" width="6.4" height="4" fill="#e8d8ee"/><rect x="488.3" y="179.8" width="1.8" height="2.8" fill="#8b3a9c"/>
<rect x="484.6" y="186" width="8" height="5.6" fill="#fff"/>
<!-- refresh -->
<path d="M531.2 183.6a8.3 8.3 0 1 1 3.2-6.4" stroke="#6ba88f" stroke-width="3.6"/>
<path d="M526.6 177.2h13.6l-6.9 7.4z" fill="#6ba88f"/>
<!-- zoom in -->
<g stroke="#7e7e7e"><circle cx="578" cy="173.3" r="8.7" stroke-width="2.6" fill="#f4f4f4"/><path d="M570.4 180.4l-8 8" stroke-width="4"/></g>
<path d="M573 173h10M578 168v10" stroke="#2f7fd0" stroke-width="1.8"/>
<!-- zoom out -->
<g stroke="#7e7e7e"><circle cx="620" cy="173.2" r="8.7" stroke-width="2.6" fill="#f4f4f4"/><path d="M612.4 180.4l-8 8" stroke-width="4"/></g>
<path d="M615.2 173h9.6" stroke="#2f7fd0" stroke-width="1.8"/>
<!-- zoom 100 -->
<g stroke="#6ba88f"><circle cx="660" cy="173.1" r="8.7" stroke-width="2.6" fill="#f4f4f4"/><path d="M652.4 180.4l-8 8" stroke-width="4"/></g>
<!-- home -->
<rect x="711" y="165.4" width="4.2" height="6" fill="#2f7fd0"/>
<rect x="695.3" y="177" width="19.8" height="12" fill="#f2f2f2" stroke="#7a7a7a" stroke-width="1.4"/>
<path d="M692 178.2l12.9-13.4 12.9 13.4" stroke="#7a7a7a" stroke-width="2.8" stroke-linejoin="miter"/>
<rect x="700.6" y="178.6" width="9" height="6.8" fill="#f5c070" stroke="#7a7a7a" stroke-width="1"/>
<!-- pane icons -->
<g fill="#f4f4f4" stroke="#808080" stroke-width="1"><rect x="732.5" y="162.5" width="28" height="28"/><rect x="774.5" y="162.5" width="28" height="28"/><rect x="816.5" y="162.5" width="28" height="28"/><rect x="858.5" y="162.5" width="28" height="28"/></g>
<g fill="#78a898"><rect x="734.2" y="164.2" width="6.8" height="24.6"/><rect x="794" y="164.2" width="6.8" height="24.6"/><rect x="818.2" y="164.2" width="24.6" height="6.8"/><rect x="860.2" y="182" width="24.6" height="6.8"/></g>
<!-- sag bar images -->
<g>
<rect x="131.5" y="288.5" width="79" height="58.5" fill="#fff" stroke="#e6e6e6"/>
<path d="M134.2 294.2h73.6M134.2 342.3h73.6" stroke="#cfcfcf" stroke-width="2"/>
<path d="M134.5 291v53.5M146.6 291v53.5M159 291v53.5M170.5 291v53.5M172.6 291v53.5M183.6 291v53.5M195.3 291v53.5M207.6 291v53.5" stroke="#cdcdcd" stroke-width="1"/>
<path d="M134.2 309.4h14M146.1 311.4h14M182.7 311.4h13.4M194.7 309.4h13.4M134.2 326.3h14M146.1 324.5h14M182.7 324.5h13.4M194.7 326.3h13.4" stroke="#333" stroke-width="1.1"/>
<path d="M158.8 309.4l7.4-13.6q1-1.8 3-1.8h3.2q2 0 3 1.8l8.1 13.6M158.8 326.3l7.4 13.4q1 1.8 3 1.8h3.2q2 0 3-1.8l8.1-13.4" stroke="#444" stroke-width="1"/>
</g>
<g transform="translate(159.4 0)">
<rect x="131.5" y="288.5" width="79" height="58.5" fill="#fff" stroke="#e6e6e6"/>
<path d="M134.2 294.2h73.6M134.2 342.3h73.6" stroke="#cfcfcf" stroke-width="2"/>
<path d="M134.5 291v53.5M146.6 291v53.5M159 291v53.5M170.5 291v53.5M172.6 291v53.5M183.6 291v53.5M195.3 291v53.5M207.6 291v53.5" stroke="#cdcdcd" stroke-width="1"/>
<path d="M134.2 309.4h14M146.1 311.4h14M182.7 311.4h13.4M194.7 309.4h13.4M134.2 326.3h14M146.1 324.5h14M182.7 324.5h13.4M194.7 326.3h13.4" stroke="#333" stroke-width="1.1"/>
<path d="M158.8 309.4l7.4-13.6q1-1.8 3-1.8h3.2q2 0 3 1.8l8.1 13.6M158.8 326.3l7.4 13.4q1 1.8 3 1.8h3.2q2 0 3-1.8l8.1-13.4" stroke="#444" stroke-width="1"/>
</g>
<!-- beam images -->
<g>
<path d="M136.4 370.8h109q-24 17-54.5 17t-54.5-17z" fill="#f8a4a4" stroke="#c47444" stroke-width="1"/>
<path d="M150 372h82q-18 10-41 10t-41-10z" fill="#fbb8b4"/>
<path d="M136.4 370.8h109" stroke="#7a6a5a" stroke-width="1"/>
<path d="M136.4 371l-3.7 5h7.4z" fill="#fff" stroke="#555" stroke-width=".9"/>
<path d="M245.4 371l-3.4 4.2h6.8z" fill="#fff" stroke="#555" stroke-width=".9"/><path d="M242 376.4h7" stroke="#444" stroke-width="1.6"/>
</g>
<g transform="translate(159.6 0)">
<path d="M136.4 370.8h109q-24 17-54.5 17t-54.5-17z" fill="#f8a4a4" stroke="#c47444" stroke-width="1"/>
<path d="M150 372h82q-18 10-41 10t-41-10z" fill="#fbb8b4"/>
<path d="M136.4 370.8h109" stroke="#7a6a5a" stroke-width="1"/>
<path d="M136.4 371l-3.7 5h7.4z" fill="#fff" stroke="#555" stroke-width=".9"/>
<path d="M245.4 371l-3.4 4.2h6.8z" fill="#fff" stroke="#555" stroke-width=".9"/><path d="M242 376.4h7" stroke="#444" stroke-width="1.6"/>
</g>
</svg>
<span class="t" style="left:466.4px;top:169px;font-size:7.5px;font-weight:700;color:#fff;letter-spacing:0.3px">IMG</span>
<span class="t" style="left:653.6px;top:183.6px;font-size:9px;color:#2f7fd0;letter-spacing:-0.3px">100%</span>

<span class="t" style="left:64.0px;top:9.2px;font-size:15px;color:#444;letter-spacing:-0.10px;">Project</span>
<span class="t" style="left:138.0px;top:9.2px;font-size:15px;color:#444;letter-spacing:0.23px;">Model</span>
<span class="t" style="left:209.0px;top:9.2px;font-size:15px;color:#444;letter-spacing:0.09px;">Loading</span>
<span class="t" style="left:291.0px;top:9.2px;font-size:15px;color:#444;letter-spacing:-0.17px;">Secondary Members</span>
<span class="t" style="left:454.2px;top:9.2px;font-size:15px;color:#444;letter-spacing:-0.14px;">Primary Members</span>
<span class="t" style="left:598.0px;top:9.2px;font-size:15px;color:#444;letter-spacing:-0.18px;">Static Analysis</span>
<span class="t" style="left:720.0px;top:9.2px;font-size:15px;color:#444;letter-spacing:-0.07px;">After Static Analysis</span>
<span class="t" style="left:879.5px;top:9.2px;font-size:15px;color:#444;letter-spacing:-0.67px;">Extras</span>
<span class="t" style="left:946.0px;top:9.2px;font-size:15px;color:#444;letter-spacing:-0.15px;">Settings</span>
<span class="t" style="left:1045.2px;top:8.8px;font-size:12.5px;color:#333;letter-spacing:-0.17px;">Model-72</span>
<span class="t" style="left:12.2px;top:49.1px;font-size:12px;color:#222;letter-spacing:-0.83px;">CYTHYE 2016</span>
<span class="t" style="left:12.2px;top:80.6px;font-size:12px;color:#222;letter-spacing:-0.81px;">TS 500:2000</span>
<span class="t" style="left:180.2px;top:49.1px;font-size:12px;color:#3a3a3a;letter-spacing:-0.22px;">Structural Steel</span>
<span class="t" style="left:180.2px;top:80.6px;font-size:12px;color:#3a3a3a;letter-spacing:-0.08px;">Concrete</span>
<span class="t" style="left:97.2px;top:116.2px;font-size:12px;color:#555;letter-spacing:-0.30px;">Design Codes</span>
<span class="t" style="left:283.6px;top:76.0px;font-size:12px;color:#3a3a3a;letter-spacing:-0.08px;">Single</span>
<span class="t" style="left:283.0px;top:91.2px;font-size:12px;color:#3a3a3a;letter-spacing:-0.00px;">Profile</span>
<span class="t" style="left:282.3px;top:116.2px;font-size:12px;color:#555;letter-spacing:-0.08px;">Purlins</span>
<span class="t" style="left:342.5px;top:76.0px;font-size:12px;color:#3a3a3a;letter-spacing:-0.12px;">Wall Girt</span>
<span class="t" style="left:395.5px;top:76.0px;font-size:12px;color:#3a3a3a;letter-spacing:-0.30px;">Girt Distances</span>
<span class="t" style="left:484.5px;top:76.0px;font-size:12px;color:#3a3a3a;letter-spacing:-0.22px;">Roof Bracings</span>
<span class="t" style="left:417.3px;top:116.2px;font-size:12px;color:#555;letter-spacing:-0.06px;">Calculations</span>
<span class="t" style="left:15.5px;top:141.6px;font-size:12px;font-weight:700;color:#2a2a2a;letter-spacing:-0.43px;">Navigation</span>
<span class="t" style="left:61.0px;top:171.8px;font-size:12px;color:#222;letter-spacing:-0.23px;">Truss-0: [0.0,6.0 m] -[20.0,6.0 m]</span>
<span class="t" style="left:36.0px;top:209.8px;font-size:12px;color:#333;letter-spacing:-0.13px;">All have same properties</span>
<span class="t" style="left:319.6px;top:211.8px;font-size:12px;color:#1a1a1a;letter-spacing:-0.06px;">Change All</span>
<span class="t" style="left:15.5px;top:247.8px;font-size:12px;font-weight:700;color:#2a2a2a;letter-spacing:-0.74px;">Purlins</span>
<span class="t" style="left:9.0px;top:271.3px;font-size:12px;font-weight:700;color:#2a2a2a;letter-spacing:-0.80px;">INPUTS</span>
<span class="t" style="left:30.2px;top:312.4px;font-size:12px;color:#2a2a2a;letter-spacing:-0.45px;">Sag Bar Type</span>
<span class="t" style="left:30.5px;top:364.9px;font-size:12px;color:#2a2a2a;letter-spacing:-0.31px;">Beam Type</span>
<span class="t" style="left:30.5px;top:408.4px;font-size:12px;color:#2a2a2a;letter-spacing:-0.33px;">Section</span>
<span class="t" style="left:30.5px;top:486.2px;font-size:12px;color:#2a2a2a;letter-spacing:-0.31px;">Distance Between</span>
<span class="t" style="left:164.4px;top:400.2px;font-size:12px;color:#2a2a2a;letter-spacing:-0.65px;">C200-15-S250GD</span>
<span class="t" style="left:178.5px;top:415.2px;font-size:12px;color:#2a2a2a;letter-spacing:0.21px;">4.87 kgf/m</span>
<span class="t" style="left:336.0px;top:400.2px;font-size:12px;color:#2a2a2a;letter-spacing:-0.76px;">IPE120-S235</span>
<span class="t" style="left:336.0px;top:415.2px;font-size:12px;color:#2a2a2a;letter-spacing:0.03px;">10.20 kgf/m</span>
<span class="t" style="left:187.3px;top:447.5px;font-size:12px;color:#2a2a2a;letter-spacing:-0.12px;">Change</span>
<span class="t" style="left:347.3px;top:447.5px;font-size:12px;color:#2a2a2a;letter-spacing:-0.19px;">Change</span>
<span class="t" style="left:186.9px;top:485.4px;font-size:12px;color:#2a2a2a;letter-spacing:-0.47px;">1.718 m</span>
<span class="t" style="left:346.9px;top:485.4px;font-size:12px;color:#2a2a2a;letter-spacing:-0.47px;">1.718 m</span>
<span class="t" style="left:9.2px;top:513.8px;font-size:12px;font-weight:700;color:#2a2a2a;letter-spacing:-1.58px;">RESULTS</span>
<span class="t" style="left:30.5px;top:536.7px;font-size:12px;color:#2a2a2a;letter-spacing:-0.32px;">Edge Stiffeners</span>
<span class="t" style="left:30.5px;top:552.0px;font-size:12px;color:#2a2a2a;letter-spacing:-0.12px;">Geometry</span>
<span class="t" style="left:152.4px;top:590.3px;font-size:11.5px;font-weight:700;color:#2a2a2a;letter-spacing:-0.27px;">UpLift</span>
<span class="t" style="left:229.0px;top:590.3px;font-size:11.5px;font-weight:700;color:#2a2a2a;letter-spacing:-0.45px;">Gravity</span>
<span class="t" style="left:312.8px;top:590.3px;font-size:11.5px;font-weight:700;color:#2a2a2a;letter-spacing:-0.34px;">UpLift</span>
<span class="t" style="left:389.0px;top:590.3px;font-size:11.5px;font-weight:700;color:#2a2a2a;letter-spacing:-0.38px;">Gravity</span>
<span class="t" style="left:30.5px;top:634.0px;font-size:12px;color:#2a2a2a;letter-spacing:-0.38px;">Cross Section</span>
<span class="t" style="left:30.5px;top:675.7px;font-size:12px;color:#2a2a2a;letter-spacing:-0.05px;">Deflection</span>
<span class="t" style="left:151.2px;top:633.0px;font-size:12px;color:#111;letter-spacing:-0.55px;">41.9%</span>
<span class="t" style="left:229.8px;top:633.0px;font-size:12px;font-weight:700;color:#fff;letter-spacing:0.01px;">88.2%</span>
<span class="t" style="left:311.2px;top:633.0px;font-size:12px;color:#111;letter-spacing:-0.65px;">33.7%</span>
<span class="t" style="left:391.0px;top:633.0px;font-size:12px;color:#111;letter-spacing:-0.63px;">72.1%</span>
<span class="t" style="left:151.2px;top:674.7px;font-size:12px;color:#111;letter-spacing:-0.55px;">40.5%</span>
<span class="t" style="left:229.8px;top:674.7px;font-size:12px;color:#111;letter-spacing:-0.47px;">46.0%</span>
<span class="t" style="left:311.2px;top:674.7px;font-size:12px;color:#111;letter-spacing:-0.65px;">52.9%</span>
<span class="t" style="left:391.0px;top:674.7px;font-size:12px;color:#111;letter-spacing:-0.63px;">60.1%</span>
<span class="t" style="left:9.2px;top:707.3px;font-size:12px;font-weight:700;color:#2a2a2a;letter-spacing:-0.75px;">REPORT VIEW</span>
<span class="t" style="left:477.0px;top:137.8px;font-size:12px;color:#333;letter-spacing:-0.09px;">Open</span>
<span class="t" style="left:523.2px;top:137.8px;font-size:12px;color:#333;letter-spacing:-0.84px;">Save</span>
<span class="t" style="left:564.0px;top:137.8px;font-size:12px;color:#333;letter-spacing:-0.36px;">Views</span>
</body></html>
